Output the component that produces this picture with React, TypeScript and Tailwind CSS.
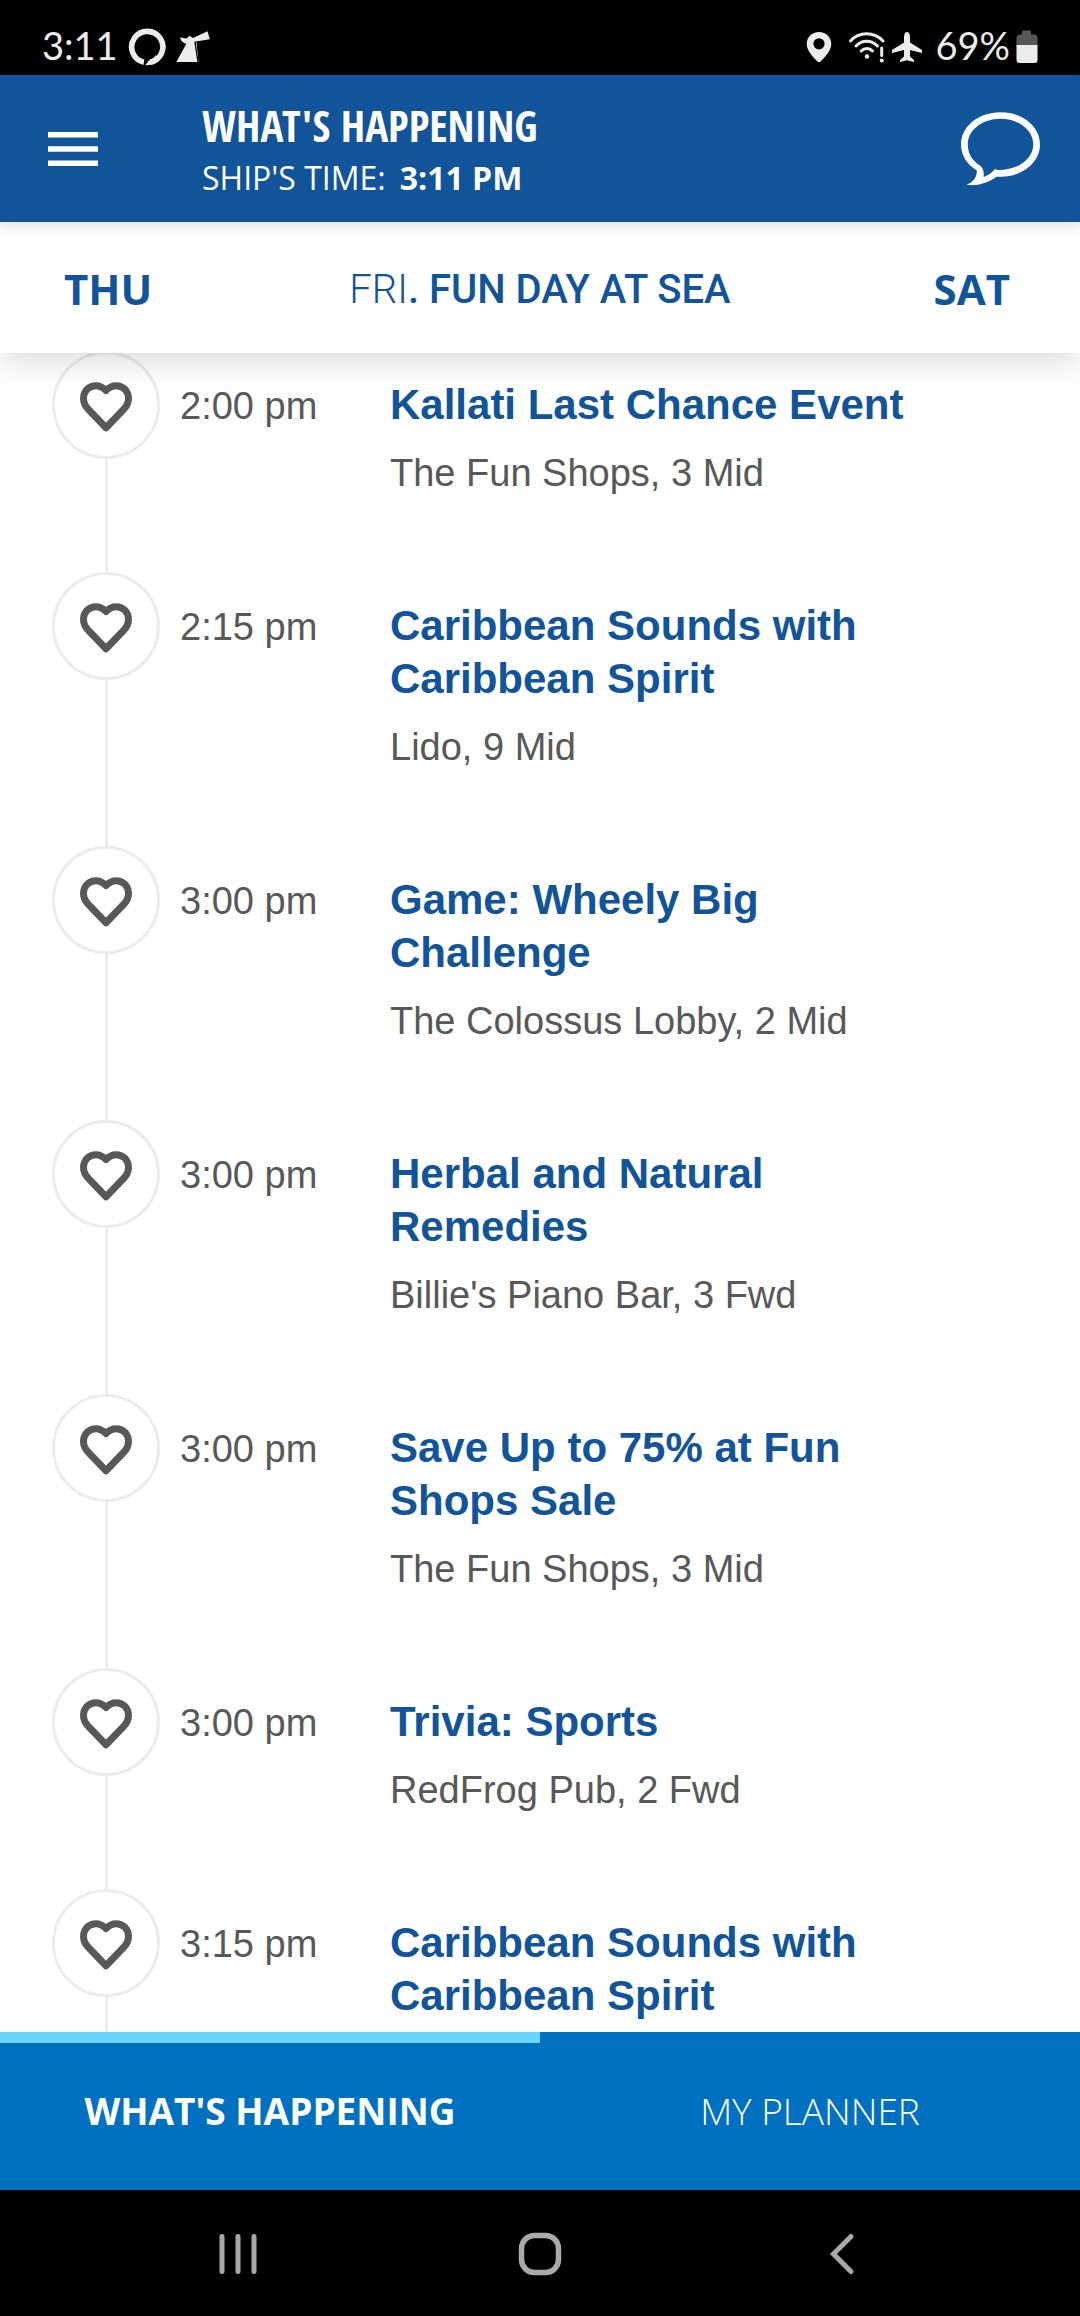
import { useState } from "react";

type Activity = { id: number; time: string; title: string; place?: string };

const activities: Activity[] = [
  { id: 1, time: "2:00 pm", title: "Kallati Last Chance Event", place: "The Fun Shops, 3 Mid" },
  { id: 2, time: "2:15 pm", title: "Caribbean Sounds with Caribbean Spirit", place: "Lido, 9 Mid" },
  { id: 3, time: "3:00 pm", title: "Game: Wheely Big Challenge", place: "The Colossus Lobby, 2 Mid" },
  { id: 4, time: "3:00 pm", title: "Herbal and Natural Remedies", place: "Billie's Piano Bar, 3 Fwd" },
  { id: 5, time: "3:00 pm", title: "Save Up to 75% at Fun Shops Sale", place: "The Fun Shops, 3 Mid" },
  { id: 6, time: "3:00 pm", title: "Trivia: Sports", place: "RedFrog Pub, 2 Fwd" },
  { id: 7, time: "3:15 pm", title: "Caribbean Sounds with Caribbean Spirit" },
];

function StatusBar() {
  return (
    <div className="flex h-[75px] shrink-0 items-center justify-between bg-black pt-[18px] pr-[42px] pl-[42px] font-['Lato',sans-serif] text-[38px] leading-[48px] text-[#ececec]">
      <div className="flex items-center">
        <span className="w-[86px] pb-1">3:11</span>
        <svg width="38" height="38" viewBox="0 0 38 38" fill="none" aria-hidden="true">
          <path d="M16 34.2A15.6 15.6 0 1 1 22 34.3" stroke="currentColor" strokeWidth="5.6" />
          <path d="M17 37.3L18 34C23 32 26 30 28 27L31 33C27 36.5 22 37.5 17 37.3Z" fill="currentColor" />
          <path d="M16.2 31V38L20 34Z" fill="#000" />
        </svg>
        <svg className="ml-[10px]" width="34" height="32" viewBox="0 0 34 32" fill="currentColor" aria-hidden="true">
          <path d="M4 6.5L10.5 7.6L13.5 4.8L17 7L31.5 0.3L34 8.5L20.5 11.5L22.5 31H0.3L10.5 12.5C7.5 12.5 5 10 4 6.5Z" />
          <path d="M34 9L19 11.2L22 31" fill="none" stroke="#000" strokeWidth="1.3" />
        </svg>
      </div>
      <div className="flex items-center">
        <svg width="26" height="32" viewBox="0 0 26 32" fill="currentColor" aria-hidden="true">
          <path fillRule="evenodd" d="M13 1C20 1 25.3 6 25.3 13C25.3 20 18.5 26.5 14.8 30.3Q13 32 11.2 30.3C7.5 26.5 0.7 20 0.7 13C0.7 6 6 1 13 1ZM13 7.2A5.6 5.6 0 1 0 13 18.4A5.6 5.6 0 1 0 13 7.2Z" />
        </svg>
        <svg className="ml-4" width="38" height="32" viewBox="0 0 38 32" fill="none" stroke="currentColor" strokeWidth="3" strokeLinecap="round" aria-hidden="true">
          <path d="M2.5 10C11 0.4 26 0.4 35 10M8 15C14 8.5 23 8.5 29.5 15M13.2 20C16.5 16.6 21.5 16.6 24.5 20" />
          <circle cx="19" cy="25.5" r="2.2" fill="currentColor" stroke="none" />
          <path d="M33.7 17V24.5" />
          <circle cx="33.7" cy="29.5" r="2" fill="currentColor" stroke="none" />
        </svg>
        <svg className="ml-[5px]" width="32" height="32" viewBox="0 0 32 32" fill="currentColor" aria-hidden="true">
          <path d="M16 1C17.8 1 19 3 19 6V11.5L31 19V22L19 19V25.5L23 29V31L16 29.3L9 31V29L13 25.5V19L1 22V19L13 11.5V6C13 3 14.2 1 16 1Z" />
        </svg>
        <span className="ml-3 pb-1">69%</span>
        <svg className="ml-[6px]" width="22" height="34" viewBox="0 0 22 34" aria-hidden="true">
          <path d="M6 1.5Q6 0.5 7 0.5H14Q15 0.5 15 1.5V4.5H18Q21.5 4.5 21.5 8V16H0.5V8Q0.5 4.5 4 4.5H6Z" fill="#575757" />
          <path d="M0.5 15H21.5V30Q21.5 33 18.5 33H3.5Q0.5 33 0.5 30Z" fill="currentColor" />
        </svg>
      </div>
    </div>
  );
}

function Header() {
  return (
    <header className="z-20 flex h-[147px] shrink-0 items-center bg-[#11549a] pr-10 pl-12 text-white shadow-[0_2px_14px_rgba(0,0,0,0.15)]">
      <button type="button" aria-label="Open menu" className="shrink-0">
        <svg width="50" height="34" viewBox="0 0 50 34" fill="currentColor" aria-hidden="true">
          <path d="M0 0H50V5.5H0ZM0 14.2H50V19.7H0ZM0 28.4H50V34H0Z" />
        </svg>
      </button>
      <div className="ml-[104px] flex-1 pt-1">
        <h1 className="font-['Open_Sans_Condensed','Roboto_Condensed','Noto_Sans_Condensed','Roboto',sans-serif] text-[43px] leading-[54px] font-extrabold whitespace-nowrap">WHAT'S HAPPENING</h1>
        <p className="flex gap-[14px] font-['Open_Sans',sans-serif] text-[32px] leading-[50px] whitespace-nowrap">
          <span>SHIP'S TIME:</span>
          <b className="font-bold">3:11 PM</b>
        </p>
      </div>
      <button type="button" aria-label="Messages" className="shrink-0">
        <svg width="79" height="74" viewBox="0 0 79 74" fill="currentColor" aria-hidden="true">
          <path
            fillRule="evenodd"
            d="M5.5 72.8C11.5 70.5 16 66 15.9 58.5C6 52.5 0 43.5 0 32.5C0 14.5 17.5 0.3 39.5 0.3C61.5 0.3 79 14.5 79 32.5C79 50.5 61.5 64.7 39.5 64.7H35.5C26 71.5 15 74.3 5.5 72.8ZM22.6 65C27.5 63.3 31 60.5 34 57L36.5 58C56.5 58.5 72.3 47 72.3 32.5C72.3 18 57.5 6.8 39.5 6.8C21.5 6.8 6.8 18 6.8 32.5C6.8 41.5 11.5 49 19 53.5C22 55.5 23.3 60 22.6 65Z"
          />
        </svg>
      </button>
    </header>
  );
}

function DateBar() {
  return (
    <nav aria-label="Day" className="z-10 grid h-[131px] shrink-0 grid-cols-[1fr_auto_1fr] items-center bg-white pt-[2px] pr-[70px] pl-[64px] text-[#11549a] shadow-[0_4px_36px_rgba(0,0,0,0.18)]">
      <button type="button" className="justify-self-start font-['Open_Sans',sans-serif] text-[42px] leading-[56px] font-bold">THU</button>
      <h2 className="pt-[2px] pl-1.5 font-['Roboto',sans-serif] text-[40px] leading-[56px] font-medium">
        <span className="font-light">FRI</span>. FUN DAY AT SEA
      </h2>
      <button type="button" className="justify-self-end font-['Open_Sans',sans-serif] text-[42px] leading-[56px] font-bold">SAT</button>
    </nav>
  );
}

function ActivityRow({ activity }: { activity: Activity }) {
  const [liked, setLiked] = useState(false);
  return (
    <li className="flex pr-[150px] pl-[52px]">
      <div className="flex w-[108px] shrink-0 flex-col items-center">
        <button
          type="button"
          aria-label={"Favorite " + activity.title}
          aria-pressed={liked}
          onClick={() => setLiked(!liked)}
          className="flex size-[108px] items-center justify-center rounded-full border-[3px] border-[#ececec] bg-white text-[#585858]"
        >
          <svg className="mt-1" width="52" height="50" viewBox="0 0 52 50" fill={liked ? "currentColor" : "none"} stroke="currentColor" strokeWidth="7" strokeLinejoin="round" aria-hidden="true">
            <path d="M26 8.5C22.5 5 19.5 3.7 16 3.7C8.5 3.7 3.5 9.2 3.5 16.5C3.5 21 5.5 24.5 8.5 27.5L26 45.7L43.5 27.5C46.5 24.5 48.5 21 48.5 16.5C48.5 9.2 43.5 3.7 36 3.7C32.5 3.7 29.5 5 26 8.5Z" />
          </svg>
        </button>
        <span className="w-[3px] flex-1 bg-[#ececec]" />
      </div>
      <time className="w-[230px] shrink-0 pt-[31px] pl-5 text-[38px] leading-[48px]">{activity.time}</time>
      <div className="flex-1 pt-[27px] pb-[75px]">
        <h3 className="text-[42px] leading-[53px] font-bold text-[#11549a]">{activity.title}</h3>
        {activity.place && <p className="mt-[18px] text-[38px] leading-[48px]">{activity.place}</p>}
      </div>
    </li>
  );
}

function SystemNav() {
  return (
    <div className="grid h-[126px] shrink-0 grid-cols-3 items-center justify-items-center bg-black px-[87px] pt-[2px] text-[#a9a9a9]">
      <button type="button" aria-label="Recent apps">
        <svg width="38" height="44" viewBox="0 0 38 44" stroke="currentColor" strokeWidth="5" strokeLinecap="round" aria-hidden="true">
          <path d="M3 4.5V39.5M19 4.5V39.5M35 4.5V39.5" />
        </svg>
      </button>
      <button type="button" aria-label="Home">
        <svg width="44" height="44" viewBox="0 0 44 44" fill="none" stroke="currentColor" strokeWidth="5.5" aria-hidden="true">
          <rect x="3.5" y="3.5" width="37" height="37" rx="13" />
        </svg>
      </button>
      <button type="button" aria-label="Back">
        <svg width="26" height="44" viewBox="0 0 26 44" fill="none" stroke="currentColor" strokeWidth="5" strokeLinecap="round" aria-hidden="true">
          <path d="M22 4.5L4.5 22L22 39.5" />
        </svg>
      </button>
    </div>
  );
}

export default function App() {
  return (
    <div className="flex h-screen flex-col overflow-hidden bg-white font-['Liberation_Sans',Arial,sans-serif] text-[#585858]">
      <StatusBar />
      <Header />
      <DateBar />
      <main className="-mt-[2px] min-h-0 flex-1 overflow-y-auto [scrollbar-width:none]">
        <ul>
          {activities.map((activity) => (
            <ActivityRow key={activity.id} activity={activity} />
          ))}
        </ul>
      </main>
      <div role="tablist" className="grid h-[158px] shrink-0 grid-cols-2 bg-[#0070c0] font-['Open_Sans',sans-serif] text-[37px] text-white">
        <button type="button" role="tab" aria-selected="true" className="border-t-[11px] border-[#69d6ff] pb-3 font-bold">
          WHAT'S HAPPENING
        </button>
        <button type="button" role="tab" aria-selected="false" className="border-t-[11px] border-transparent pb-3 font-light">
          MY PLANNER
        </button>
      </div>
      <SystemNav />
    </div>
  );
}
